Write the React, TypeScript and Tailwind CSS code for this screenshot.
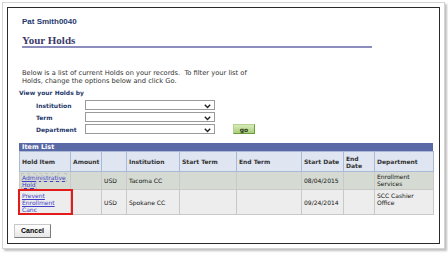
import React from "react";

const Chevron = () => (
  <svg width="7" height="5" viewBox="0 0 7 5" className="absolute right-[3px] top-[3px]">
    <path d="M0.8 0.8 L3.5 3.6 L6.2 0.8" stroke="#222" strokeWidth="1.4" fill="none" />
  </svg>
);

const Select = () => (
  <div className="relative w-[130px] h-[10px] border border-[#9a9a9a] bg-white">
    <Chevron />
  </div>
);

const th = "border border-[#a9b9d6] text-left align-middle px-[2px] font-bold text-[#333] whitespace-nowrap";
const td = "border border-[#c9c9c9] px-[2px] align-middle text-[#111] whitespace-nowrap";

export default function App() {
  return (
    <div className="w-[448px] h-[253px] bg-white relative overflow-hidden" style={{ fontFamily: '"DejaVu Sans", Verdana, sans-serif' }}>
      <div className="ml-[2px] mt-[2px] w-[443px] h-[247px] border border-[#d4d4d4] bg-white shadow-[2px_2px_2px_rgba(0,0,0,0.25)]">
        <div className="ml-[4px] mt-[4px] w-[433px] h-[237px] border border-[#2a2a2a] bg-white">
          <div className="pl-[14px] pt-[9px] text-[8px] leading-[10px] font-bold text-[#1f3a6d]" style={{ fontFamily: '"Liberation Sans", Arial, sans-serif' }}>
            Pat Smith0040
          </div>
          <div className="ml-[14px] mt-[7px] w-[350px] border-b-2 border-[#8d8dbd] text-[11px] leading-[12px] font-bold text-[#3b3b6a]" style={{ fontFamily: '"Liberation Serif", Georgia, serif' }}>
            Your Holds
          </div>
          <div className="ml-[14px] mt-[21px] text-[6.7px] leading-[8px] text-[#333]">
            <div className="whitespace-nowrap">Below is a list of current Holds on your records.&nbsp; To filter your list of</div>
            <div>Holds, change the options below and click Go.</div>
          </div>
          <div className="ml-[11px] mt-[4px] text-[6px] leading-[8px] font-bold text-[#1f3a6d]">View your Holds by</div>
          <div className="ml-[28px] mt-[3px] flex flex-col gap-[2px] text-[6px] font-bold text-[#1f3a6d]">
            <div className="flex items-center h-[10px]">
              <div className="w-[49px]">Institution</div>
              <Select />
            </div>
            <div className="flex items-center h-[10px]">
              <div className="w-[49px]">Term</div>
              <Select />
            </div>
            <div className="flex items-center h-[10px]">
              <div className="w-[49px]">Department</div>
              <Select />
              <div className="ml-[18px] w-[22px] h-[10px] flex items-center justify-center border border-[#b6d196] border-r-[#6d9a3c] border-b-[#6d9a3c] bg-gradient-to-b from-[#d8ebb8] to-[#a9cf7a] text-[#2d3d1a] text-[6px] font-bold">
                go
              </div>
            </div>
          </div>
          <div className="ml-[11px] mt-[9px] w-[414px]">
            <div className="h-[8px] bg-[#5a6aa7] text-white text-[6.5px] leading-[8px] font-bold pl-[3px]">Item List</div>
            <table className="border-collapse table-fixed w-[414px] text-[6px] leading-[7px]">
              <colgroup>
                <col style={{ width: 51 }} />
                <col style={{ width: 31 }} />
                <col style={{ width: 25 }} />
                <col style={{ width: 53 }} />
                <col style={{ width: 57 }} />
                <col style={{ width: 65 }} />
                <col style={{ width: 42 }} />
                <col style={{ width: 31 }} />
                <col style={{ width: 59 }} />
              </colgroup>
              <thead>
                <tr className="h-[20px] bg-[#dfe6f1]">
                  <th className={th}>Hold Item</th>
                  <th className={th}>Amount</th>
                  <th className={th}></th>
                  <th className={th}>Institution</th>
                  <th className={th}>Start Term</th>
                  <th className={th}>End Term</th>
                  <th className={th}>Start Date</th>
                  <th className={th}>End<br />Date</th>
                  <th className={th}>Department</th>
                </tr>
              </thead>
              <tbody>
                <tr className="h-[18px] bg-[#d5dbd3]">
                  <td className={td}>
                    <span className="text-[#3f3fc7] underline outline outline-1 outline-dotted outline-[#c4c4c4]">Administrative<br />Hold</span>
                  </td>
                  <td className={td}></td>
                  <td className={td}>USD</td>
                  <td className={td}>Tacoma CC</td>
                  <td className={td}></td>
                  <td className={td}></td>
                  <td className={td}>08/04/2015</td>
                  <td className={td}></td>
                  <td className={td + " align-top pt-[1px]"}>Enrollment<br />Services</td>
                </tr>
                <tr className="h-[25px] bg-[#ededed]">
                  <td className={td + " relative"}>
                    <span className="text-[#3f3fc7] underline">Prevent<br />Enrollment<br />Canc</span>
                    <div className="absolute left-[-2px] top-[-1px] w-[55px] h-[26px] border-2 border-[#e21b1b]" />
                  </td>
                  <td className={td}></td>
                  <td className={td}>USD</td>
                  <td className={td}>Spokane CC</td>
                  <td className={td}></td>
                  <td className={td}></td>
                  <td className={td}>09/24/2014</td>
                  <td className={td}></td>
                  <td className={td + " align-top pt-[2px]"}>SCC Cashier<br />Office</td>
                </tr>
              </tbody>
            </table>
          </div>
          <div className="ml-[6px] mt-[9px] w-[37px] h-[14px] flex items-center justify-center border border-[#c8c8c8] border-r-[#7a7a7a] border-b-[#7a7a7a] bg-gradient-to-b from-white to-[#e6e6e6] text-[7px] font-bold text-black" style={{ fontFamily: '"Liberation Sans", Arial, sans-serif' }}>
            Cancel
          </div>
        </div>
      </div>
    </div>
  );
}
